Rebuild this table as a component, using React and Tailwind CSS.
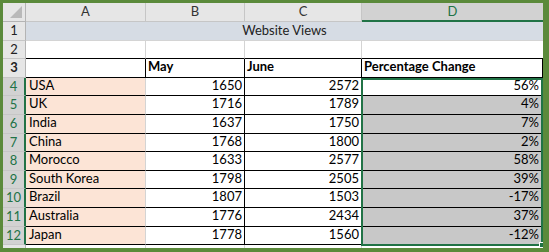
const font = { fontFamily: "Lato, 'Liberation Sans', sans-serif" };

const data = [
  ["USA", 1650, 2572, "56%"],
  ["UK", 1716, 1789, "4%"],
  ["India", 1637, 1750, "7%"],
  ["China", 1768, 1800, "2%"],
  ["Morocco", 1633, 2577, "58%"],
  ["South Korea", 1798, 2505, "39%"],
  ["Brazil", 1807, 1503, "-17%"],
  ["Australia", 1776, 2434, "37%"],
  ["Japan", 1778, 1560, "-12%"],
];

function RowHead({ n, selected }) {
  return (
    <div
      className={`w-[23px] shrink-0 flex items-center justify-center border-b border-[#c6c6c6] text-[13px] ${
        selected
          ? "bg-[#d2d2d2] text-[#217346] border-r-2 border-r-[#217346]"
          : "bg-[#e6e6e6] text-[#222] border-r border-r-[#b4b4b4]"
      }`}
    >
      {n}
    </div>
  );
}

export default function App() {
  return (
    <div
      className="w-[549px] h-[252px] bg-[#5b8a3b] pt-[3px] pl-[3px] pr-[6px] pb-[4px]"
      style={font}
    >
      <div className="relative w-full h-full bg-white overflow-hidden flex flex-col text-[13px] text-black">
        {/* column headers */}
        <div className="flex h-[19px] shrink-0 bg-[#e6e6e6] text-[#333]">
          <div className="w-[23px] shrink-0 border-r border-b border-[#b4b4b4] relative">
            <div className="absolute right-[3px] bottom-[3px] w-0 h-0 border-l-[12px] border-l-transparent border-b-[12px] border-b-[#b9b9b9]" />
          </div>
          <div className="w-[120px] flex items-center justify-center border-r border-b border-[#c6c6c6]">A</div>
          <div className="w-[99px] flex items-center justify-center border-r border-b border-[#c6c6c6]">B</div>
          <div className="w-[117px] flex items-center justify-center border-r border-b border-[#c6c6c6]">C</div>
          <div className="flex-1 flex items-center justify-center bg-[#d2d2d2] border-b-2 border-[#217346] text-[#217346]">D</div>
        </div>

        {/* row 1 */}
        <div className="flex h-[18.6px] shrink-0">
          <RowHead n={1} />
          <div className="flex-1 bg-[#d6dce4] flex items-center justify-center border-b border-[#d4d4d4] text-[#222]">
            Website Views
          </div>
        </div>

        {/* row 2 */}
        <div className="flex h-[18.6px] shrink-0">
          <RowHead n={2} />
          <div className="w-[120px] border-r border-[#d4d4d4] border-b border-b-black" />
          <div className="w-[99px] border-r border-[#d4d4d4] border-b border-b-black" />
          <div className="w-[117px] border-r border-[#d4d4d4] border-b border-b-black" />
          <div className="flex-1 border-b border-b-black" />
        </div>

        {/* row 3 */}
        <div className="flex h-[18.6px] shrink-0 font-bold">
          <RowHead n={3} />
          <div className="w-[120px] border-r border-black border-b border-b-black" />
          <div className="w-[99px] border-r border-black border-b border-b-black flex items-end px-[2px]">May</div>
          <div className="w-[117px] border-r border-black border-b border-b-black flex items-end px-[2px]">June</div>
          <div className="flex-1 border-r border-black border-b border-b-black flex items-end px-[2px]">Percentage Change</div>
        </div>

        {data.map(([c, may, june, pct], i) => (
          <div key={c} className="flex h-[18.6px] shrink-0">
            <RowHead n={i + 4} selected />
            <div className="w-[120px] bg-[#fce4d6] border-r border-[#d4d4d4] border-b border-b-black flex items-end px-[3px]">
              {c}
            </div>
            <div className="w-[99px] border-r border-black border-b border-b-black flex items-end justify-end px-[2px]">
              {may}
            </div>
            <div className="w-[117px] border-r border-black border-b border-b-black flex items-end justify-end px-[2px]">
              {june}
            </div>
            <div
              className={`flex-1 border-r border-black border-b border-b-black flex items-end justify-end px-[3px] ${
                i === 0 ? "bg-white" : "bg-[#c8c8c8]"
              }`}
            >
              {pct}
            </div>
          </div>
        ))}

        {/* row 13 partial */}
        <div className="flex flex-1">
          <div className="w-[23px] shrink-0 bg-[#e6e6e6] border-r border-[#b4b4b4]" />
          <div className="w-[120px] border-r border-[#d4d4d4]" />
          <div className="w-[99px] border-r border-[#d4d4d4]" />
          <div className="w-[117px] border-r border-[#d4d4d4]" />
          <div className="flex-1" />
        </div>

        {/* selection outline D4:D12 */}
        <div className="absolute left-[358px] top-[74.8px] right-0 h-[168.4px] border-2 border-[#217346] pointer-events-none">
          <div className="absolute -right-[4px] -bottom-[4px] w-[6px] h-[6px] bg-[#217346] border border-white" />
        </div>
      </div>
    </div>
  );
}
